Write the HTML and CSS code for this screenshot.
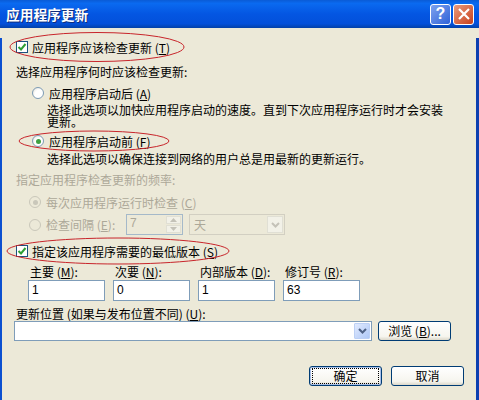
FILE: index.html
```html
<!DOCTYPE html>
<html lang="zh-CN">
<head>
  <meta charset="UTF-8">
  <title>应用程序更新</title>
  <link rel="stylesheet" href="styles.css">
</head>
<body>
  <div class="window">
    <div class="titlebar">
      <span class="title">应用程序更新</span>
      <span class="tbtn help">?</span>
      <span class="tbtn close">
        <svg width="14" height="14" viewBox="0 0 14 14"><path d="M2 2 L12 12 M12 2 L2 12" stroke="#fff" stroke-width="2.2" fill="none"/></svg>
      </span>
    </div>

    <div class="content">
      <div class="row check-row first">
        <span class="check"><svg width="10" height="10" viewBox="0 0 10 10"><path d="M1.5 5 L4 7.5 L8.5 2" stroke="#2f9e35" stroke-width="2" fill="none"/></svg></span>
        <span>应用程序应该检查更新 (<u>T</u>)</span>
      </div>
      <div class="row label when">选择应用程序何时应该检查更新:</div>

      <div class="row radio-row after">
        <span class="radio"></span>
        <span>应用程序启动后 (<u>A</u>)</span>
      </div>
      <p class="desc desc-after">选择此选项以加快应用程序启动的速度。直到下次应用程序运行时才会安装更新。</p>

      <div class="row radio-row before">
        <span class="radio on"></span>
        <span>应用程序启动前 (<u>F</u>)</span>
      </div>
      <p class="desc desc-before">选择此选项以确保连接到网络的用户总是用最新的更新运行。</p>

      <div class="row label disabled freq">指定应用程序检查更新的频率:</div>
      <div class="row radio-row sub disabled every">
        <span class="radio on"></span>
        <span>每次应用程序运行时检查 (<u>C</u>)</span>
      </div>
      <div class="row radio-row sub disabled interval">
        <span class="radio"></span>
        <span class="interval-label">检查间隔 (<u>E</u>):</span>
        <span class="spin">
          <span class="spin-val">7</span>
          <span class="spin-btns">
            <span class="spin-btn"><svg width="7" height="4" viewBox="0 0 7 4"><path d="M0 4 L3.5 0 L7 4 Z" fill="#c4c2b8"/></svg></span>
            <span class="spin-btn"><svg width="7" height="4" viewBox="0 0 7 4"><path d="M0 0 L3.5 4 L7 0 Z" fill="#c4c2b8"/></svg></span>
          </span>
        </span>
        <span class="unit">
          <span class="unit-val">天</span>
          <span class="unit-btn"><svg width="9" height="6" viewBox="0 0 9 6"><path d="M1 1 L4.5 4.5 L8 1" stroke="#c4c2b8" stroke-width="2" fill="none"/></svg></span>
        </span>
      </div>

      <div class="row check-row minimum">
        <span class="check"><svg width="10" height="10" viewBox="0 0 10 10"><path d="M1.5 5 L4 7.5 L8.5 2" stroke="#2f9e35" stroke-width="2" fill="none"/></svg></span>
        <span>指定该应用程序需要的最低版本 (<u>S</u>)</span>
      </div>

      <div class="versions">
        <div class="ver"><label>主要 (<u>M</u>):</label><div class="field">1</div></div>
        <div class="ver"><label>次要 (<u>N</u>):</label><div class="field">0</div></div>
        <div class="ver"><label>内部版本 (<u>D</u>):</label><div class="field">1</div></div>
        <div class="ver"><label>修订号 (<u>R</u>):</label><div class="field">63</div></div>
      </div>

      <div class="row label location">更新位置 (如果与发布位置不同) (<u>U</u>):</div>
      <div class="location-row">
        <div class="combo">
          <span class="combo-btn"><svg width="9" height="6" viewBox="0 0 9 6"><path d="M1 1 L4.5 4.5 L8 1" stroke="#4d6185" stroke-width="2" fill="none"/></svg></span>
        </div>
        <button class="btn browse">浏览 (<u>B</u>)...</button>
      </div>

      <div class="actions">
        <button class="btn ok"><span class="focus">确定</span></button>
        <button class="btn">取消</button>
      </div>
    </div>

    <!-- red marks drawn over the dialog -->
    <svg class="marks" width="479" height="400" viewBox="0 0 479 400">
      <ellipse cx="97" cy="47" rx="87" ry="14.5"/>
      <ellipse cx="94" cy="141" rx="75" ry="10"/>
      <ellipse cx="118" cy="251" rx="111" ry="13"/>
    </svg>
  </div>
</body>
</html>
```

FILE: styles.css
```css
* {
  box-sizing: border-box;
}

body {
  margin: 0;
  font-family: "Noto Sans CJK SC", "Liberation Sans", sans-serif;
  font-size: 12px;
  color: #000;
}

.window {
  position: relative;
  width: 479px;
  height: 400px;
  overflow: hidden;
  background: #ece9d8;
}

/* Title bar */
.titlebar {
  height: 28px;
  display: flex;
  align-items: center;
  padding: 0 5px 0 6px;
  background: linear-gradient(to bottom, #0a5bd6 0%, #0a6af0 12%, #0456e2 50%, #0350da 85%, #0341a8 100%);
}

.title {
  flex: 1;
  color: #fff;
  font-size: 13.7px;
  font-weight: 700;
  line-height: 18px;
  text-shadow: 1px 1px 0 #0f2d7c;
}

.tbtn {
  width: 21px;
  height: 21px;
  display: flex;
  align-items: center;
  justify-content: center;
  border: 1px solid #fff;
  border-radius: 3px;
  color: #fff;
}

.help {
  background: linear-gradient(135deg, #7da2ee, #2f62d8);
  font-family: "Liberation Sans", sans-serif;
  font-size: 16px;
  font-weight: 700;
  margin-right: 2px;
}

.close {
  background: linear-gradient(135deg, #eb9b7d, #c8401c);
}

/* Dialog body */
.content {
  height: 372px;
  padding: 0 0 0 16px;
  border-left: 2px solid #0c50d0;
  border-right: 3px solid #0c3fb0;
}

.row {
  display: flex;
  align-items: center;
  height: 18px;
  white-space: nowrap;
}

.check-row {
  margin-left: -2px;
}

.first {
  margin-top: 10px;
}

.when {
  margin-top: 6px;
  margin-left: -2px;
}

.after {
  margin-top: 4px;
}

.before {
  margin-top: 4px;
}

.check {
  width: 12px;
  height: 12px;
  margin-right: 4px;
  display: flex;
  align-items: center;
  justify-content: center;
  background: #fff;
  border: 1px solid #1c5180;
}

.radio {
  width: 12px;
  height: 12px;
  margin-right: 5px;
  border-radius: 50%;
  border: 1px solid #7d9bb5;
  background: radial-gradient(circle at 65% 65%, #fff 50%, #dcd9cc 100%);
  display: flex;
  align-items: center;
  justify-content: center;
}

.radio.on::after {
  content: "";
  width: 5px;
  height: 5px;
  border-radius: 50%;
  background: #3fa142;
}

.radio-row {
  margin-left: 14px;
}

.desc {
  margin: 0 0 0 29px;
  width: 400px;
  line-height: 12px;
}

.desc-after {
  margin-top: 2px;
  height: 24px;
}

.desc-before {
  margin-top: 3px;
  height: 12px;
}

.disabled {
  color: #aca899;
}

.freq {
  margin-top: 5px;
  margin-left: -2px;
}

.sub {
  margin-left: 11px;
}

.every {
  margin-top: 5px;
}

.interval {
  margin-top: 3px;
  height: 21px;
}

.disabled .radio {
  border-color: #c9c7ba;
  background: #ece9d8;
}

.disabled .radio.on::after {
  background: #c9c7ba;
}

.interval-label {
  width: 80px;
}

.spin {
  width: 57px;
  height: 21px;
  display: flex;
  border: 1px solid #a5b9c9;
  background: #ece9d8;
  padding: 1px;
}

.spin-val {
  flex: 1;
  padding-left: 2px;
  line-height: 15px;
  font-family: "Liberation Sans", sans-serif;
}

.spin-btns {
  width: 15px;
  display: flex;
  flex-direction: column;
  gap: 1px;
}

.spin-btn {
  flex: 1;
  display: flex;
  align-items: center;
  justify-content: center;
  background: #f2f1e8;
  border: 1px solid #e0dfd4;
}

.unit {
  width: 96px;
  height: 21px;
  margin-left: 6px;
  display: flex;
  align-items: center;
  border: 1px solid #d2cfc2;
  padding: 1px;
}

.unit-val {
  flex: 1;
  padding-left: 3px;
}

.unit-btn {
  width: 16px;
  height: 17px;
  display: flex;
  align-items: center;
  justify-content: center;
  background: #f2f1e8;
  border: 1px solid #e0dfd4;
}

.minimum {
  margin-top: 7px;
}

/* Version numbers */
.versions {
  display: grid;
  grid-template-columns: 77px 77px 77px 77px;
  column-gap: 8px;
  margin: 4px 0 0 10px;
}

.ver label {
  display: block;
  height: 16px;
  line-height: 16px;
  padding-left: 2px;
  white-space: nowrap;
}

.field {
  height: 21px;
  padding-left: 3px;
  line-height: 19px;
  background: #fff;
  border: 1px solid #7f9db9;
  font-family: "Liberation Sans", sans-serif;
}

.location {
  height: 16px;
  margin: 4px 0 0 -2px;
}

.location-row {
  display: flex;
  margin-left: -4px;
}

.combo {
  width: 358px;
  height: 20px;
  padding: 1px;
  display: flex;
  justify-content: flex-end;
  background: #fff;
  border: 1px solid #7f9db9;
}

.combo-btn {
  width: 16px;
  display: flex;
  align-items: center;
  justify-content: center;
  background: linear-gradient(135deg, #e1eafe, #aec8f7);
  border: 1px solid #bcd0f5;
  border-radius: 1px;
}

.btn {
  width: 73px;
  height: 20px;
  padding: 0;
  font-family: inherit;
  font-size: 12px;
  line-height: 16px;
  color: #000;
  background: linear-gradient(to bottom, #fff 0%, #f6f5ee 80%, #dcd8ca 100%);
  border: 1px solid #003c74;
  border-radius: 3px;
}

.browse {
  margin-left: 6px;
}

.actions {
  display: flex;
  gap: 9px;
  margin: 25px 0 0 291px;
}

.ok {
  padding: 1px;
  box-shadow: inset 0 0 0 1px #a9c0e8;
}

.focus {
  display: block;
  height: 16px;
  border: 1px dotted #000;
  line-height: 14px;
  margin: 0 1px;
}

/* Red ellipses */
.marks {
  position: absolute;
  top: 0;
  left: 0;
  pointer-events: none;
}

.marks ellipse {
  fill: none;
  stroke: #c8252b;
  stroke-width: 1;
}
```
